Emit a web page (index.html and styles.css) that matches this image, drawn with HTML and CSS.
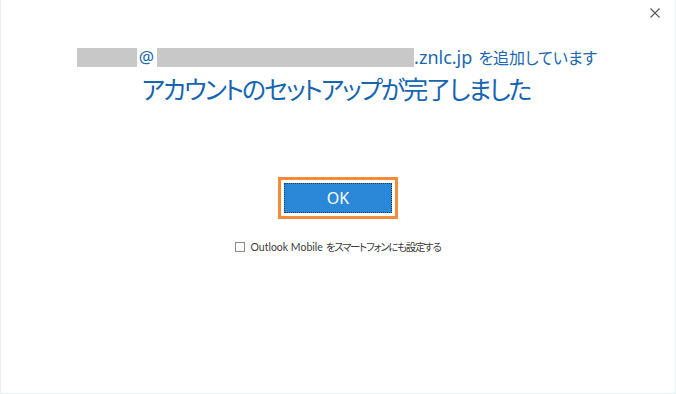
FILE: index.html
```html
<!DOCTYPE html>
<html lang="ja">
<head>
<meta charset="utf-8">
<link rel="stylesheet" href="styles.css">
</head>
<body>
<div class="window">
  <button class="close" aria-label="閉じる">
    <svg width="10" height="10" viewBox="0 0 10 10"><path d="M0.5 0.5 L9.5 9.5 M9.5 0.5 L0.5 9.5" stroke="#555" stroke-width="1.1" fill="none"/></svg>
  </button>
  <div class="content">
    <div class="adding">
      <span class="mask mask-user"></span><span class="at">@</span><span class="mask mask-domain"></span><span class="domain">.znlc.jp</span><span class="jp">を追加しています</span>
    </div>
    <h1 class="title">アカウントのセットアップが完了しました</h1>
    <div class="ok-wrap">
      <button class="ok">OK</button>
    </div>
    <label class="mobile">
      <span class="box"></span>
      <span class="mobile-en">Outlook Mobile</span><span class="mobile-jp">をスマートフォンにも設定する</span>
    </label>
  </div>
</div>
</body>
</html>
```

FILE: styles.css
```css
* { box-sizing: border-box; }
html, body { margin: 0; padding: 0; background: #fff; }
body {
  font-family: "Noto Sans", "Noto Sans CJK JP", sans-serif;
}
.window {
  position: relative;
  width: 676px;
  height: 394px;
  background: #fff;
  border: 1px solid #e4f1f1;
  border-top: none;
}
.close {
  position: absolute;
  top: 7px;
  right: 14px;
  width: 12px;
  height: 12px;
  padding: 0;
  border: none;
  background: none;
  display: flex;
  align-items: center;
  justify-content: center;
}
.content {
  display: flex;
  flex-direction: column;
  align-items: center;
  padding-top: 47px;
}
.adding {
  display: flex;
  align-items: center;
  height: 20px;
  margin-left: -2px;
  color: #1b67b0;
  font-size: 17px;
  line-height: 20px;
  white-space: nowrap;
}
.mask {
  display: inline-block;
  height: 19px;
  background: #c8c8c8;
}
.mask-user { width: 60px; }
.mask-domain { width: 257px; }
.at { margin: 0 3px 0 2px; }
.domain { font-size: 18px; }
.jp {
  margin-left: 6px;
  font-family: "Noto Sans CJK JP", sans-serif;
  font-size: 16px;
  font-feature-settings: "palt";
}
.title {
  margin: 6px 0 0 -4px;
  font-family: "Noto Sans CJK JP", sans-serif;
  font-weight: 400;
  font-size: 25px;
  line-height: 30px;
  color: #1565b3;
  font-feature-settings: "palt";
  letter-spacing: -2px;
}
.ok-wrap {
  margin-top: 74px;
  border: 3px solid #f58a3b;
  padding: 3px;
  background: #fff;
}
.ok {
  display: block;
  width: 108px;
  height: 30px;
  background: #2b88d8;
  border: 1px dotted #1c3d5c;
  outline: none;
  color: #fff;
  font-family: "Noto Sans", sans-serif;
  font-size: 16px;
  padding: 0;
}
.mobile {
  display: flex;
  align-items: center;
  margin-top: 21px;
  color: #3c3c3c;
  line-height: 14px;
}
.box {
  width: 10px;
  height: 10px;
  margin-right: 5px;
  border: 1px solid #8a8a8a;
  background: #fff;
}
.mobile-en {
  font-family: Lato, "Noto Sans", sans-serif;
  font-size: 10.5px;
}
.mobile-jp {
  margin-left: 3px;
  font-family: "Noto Sans CJK JP", sans-serif;
  font-size: 10.5px;
  font-feature-settings: "palt";
  letter-spacing: -1.3px;
}
```
